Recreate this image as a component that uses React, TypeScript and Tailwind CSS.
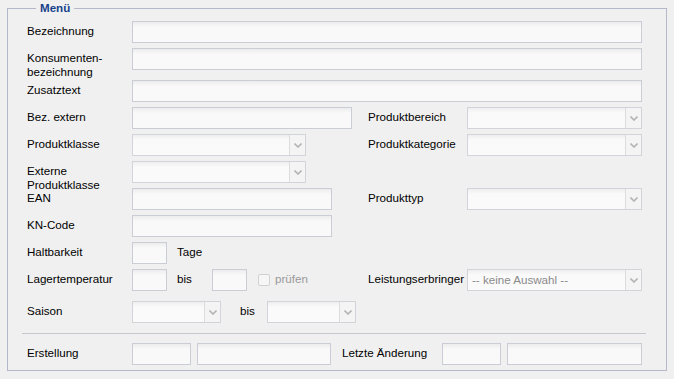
import React from 'react';

const font = "font-['Liberation_Sans',Arial,sans-serif]";

function TextField({ w }: { w: string }) {
  return (
    <div
      className={`${w} h-[22px] shrink-0 border border-[#cbcdd6] bg-[linear-gradient(#ececec,#f9f9f9_5px)]`}
    />
  );
}

function Combo({ w, placeholder }: { w: string; placeholder?: string }) {
  return (
    <div className={`${w} h-[22px] shrink-0 flex border border-[#d3d4da] bg-[linear-gradient(#eeeeee,#fafafa_5px)]`}>
      <div className="flex-1 pl-[4px] text-[#8a8a8a] leading-[20px] whitespace-nowrap overflow-hidden">
        {placeholder}
      </div>
      <div className="w-[16px] border-l border-[#dcdcdc] bg-[#f4f4f4] flex items-center justify-center">
        <svg width="8" height="5" viewBox="0 0 8 5">
          <path d="M0.5 0.5 L4 4 L7.5 0.5" fill="none" stroke="#b4b4b4" strokeWidth="1.6" />
        </svg>
      </div>
    </div>
  );
}

function Label({ w, children, muted }: { w: string; children: React.ReactNode; muted?: boolean }) {
  return (
    <div className={`${w} shrink-0 pt-[3px] leading-[14px] whitespace-nowrap ${muted ? 'text-[#9a9a9a]' : 'text-[#000]'}`}>
      {children}
    </div>
  );
}

function Row({ mt, children }: { mt: string; children: React.ReactNode }) {
  return <div className={`flex items-start h-[22px] ${mt}`}>{children}</div>;
}

export default function App() {
  return (
    <div className={`w-[674px] h-[379px] bg-[#f0f0f0] pt-[1px] px-[7px] text-[11.6px] ${font}`}>
      <fieldset className="border border-[#b5b8c8] w-[660px] pl-[19px] pb-[5px]">
        <legend className="ml-[9px] px-[4px] leading-[14px] font-bold text-[#15428b]">Menü</legend>
        <div className="pt-[6px]">
          <Row mt="mt-0">
            <Label w="w-[105px]">Bezeichnung</Label>
            <TextField w="w-[510px]" />
          </Row>
          <Row mt="mt-[5px]">
            <Label w="w-[105px]">
              Konsumenten-
              <br />
              bezeichnung
            </Label>
            <TextField w="w-[510px]" />
          </Row>
          <Row mt="mt-[10px]">
            <Label w="w-[105px]">Zusatztext</Label>
            <TextField w="w-[510px]" />
          </Row>
          <Row mt="mt-[5px]">
            <Label w="w-[105px]">Bez. extern</Label>
            <TextField w="w-[220px]" />
            <div className="w-[16px] shrink-0" />
            <Label w="w-[99px]">Produktbereich</Label>
            <Combo w="w-[175px]" />
          </Row>
          <Row mt="mt-[5px]">
            <Label w="w-[105px]">Produktklasse</Label>
            <Combo w="w-[174px]" />
            <div className="w-[62px] shrink-0" />
            <Label w="w-[99px]">Produktkategorie</Label>
            <Combo w="w-[175px]" />
          </Row>
          <Row mt="mt-[5px]">
            <Label w="w-[105px]">
              Externe
              <br />
              Produktklasse
            </Label>
            <Combo w="w-[174px]" />
          </Row>
          <Row mt="mt-[5px]">
            <Label w="w-[105px]">EAN</Label>
            <TextField w="w-[200px]" />
            <div className="w-[36px] shrink-0" />
            <Label w="w-[99px]">Produkttyp</Label>
            <Combo w="w-[175px]" />
          </Row>
          <Row mt="mt-[5px]">
            <Label w="w-[105px]">KN-Code</Label>
            <TextField w="w-[200px]" />
          </Row>
          <Row mt="mt-[5px]">
            <Label w="w-[105px]">Haltbarkeit</Label>
            <TextField w="w-[35px]" />
            <div className="w-[10px] shrink-0" />
            <Label w="w-[40px]">Tage</Label>
          </Row>
          <Row mt="mt-[5px]">
            <Label w="w-[105px]">Lagertemperatur</Label>
            <TextField w="w-[35px]" />
            <div className="w-[10px] shrink-0" />
            <Label w="w-[35px]">bis</Label>
            <TextField w="w-[35px]" />
            <div className="w-[11px] shrink-0" />
            <div className="mt-[5px] w-[12px] h-[12px] shrink-0 rounded-[2px] border border-[#d2d2d2] bg-[#f6f6f6]" />
            <div className="w-[5px] shrink-0" />
            <Label w="w-[93px]" muted>
              prüfen
            </Label>
            <Label w="w-[99px]">Leistungserbringer</Label>
            <Combo w="w-[175px]" placeholder="-- keine Auswahl --" />
          </Row>
          <Row mt="mt-[10px]">
            <Label w="w-[105px]">Saison</Label>
            <Combo w="w-[89px]" />
            <div className="w-[19px] shrink-0" />
            <Label w="w-[27px]">bis</Label>
            <Combo w="w-[89px]" />
          </Row>
          <div className="mt-[10px] -ml-[5px] w-[624px] h-px bg-[#c5c7d1]" />
          <Row mt="mt-[9px]">
            <Label w="w-[105px]">Erstellung</Label>
            <TextField w="w-[59px]" />
            <div className="w-[6px] shrink-0" />
            <TextField w="w-[134px]" />
            <div className="w-[11px] shrink-0" />
            <Label w="w-[100px]">Letzte Änderung</Label>
            <TextField w="w-[59px]" />
            <div className="w-[6px] shrink-0" />
            <TextField w="w-[135px]" />
          </Row>
        </div>
      </fieldset>
    </div>
  );
}
